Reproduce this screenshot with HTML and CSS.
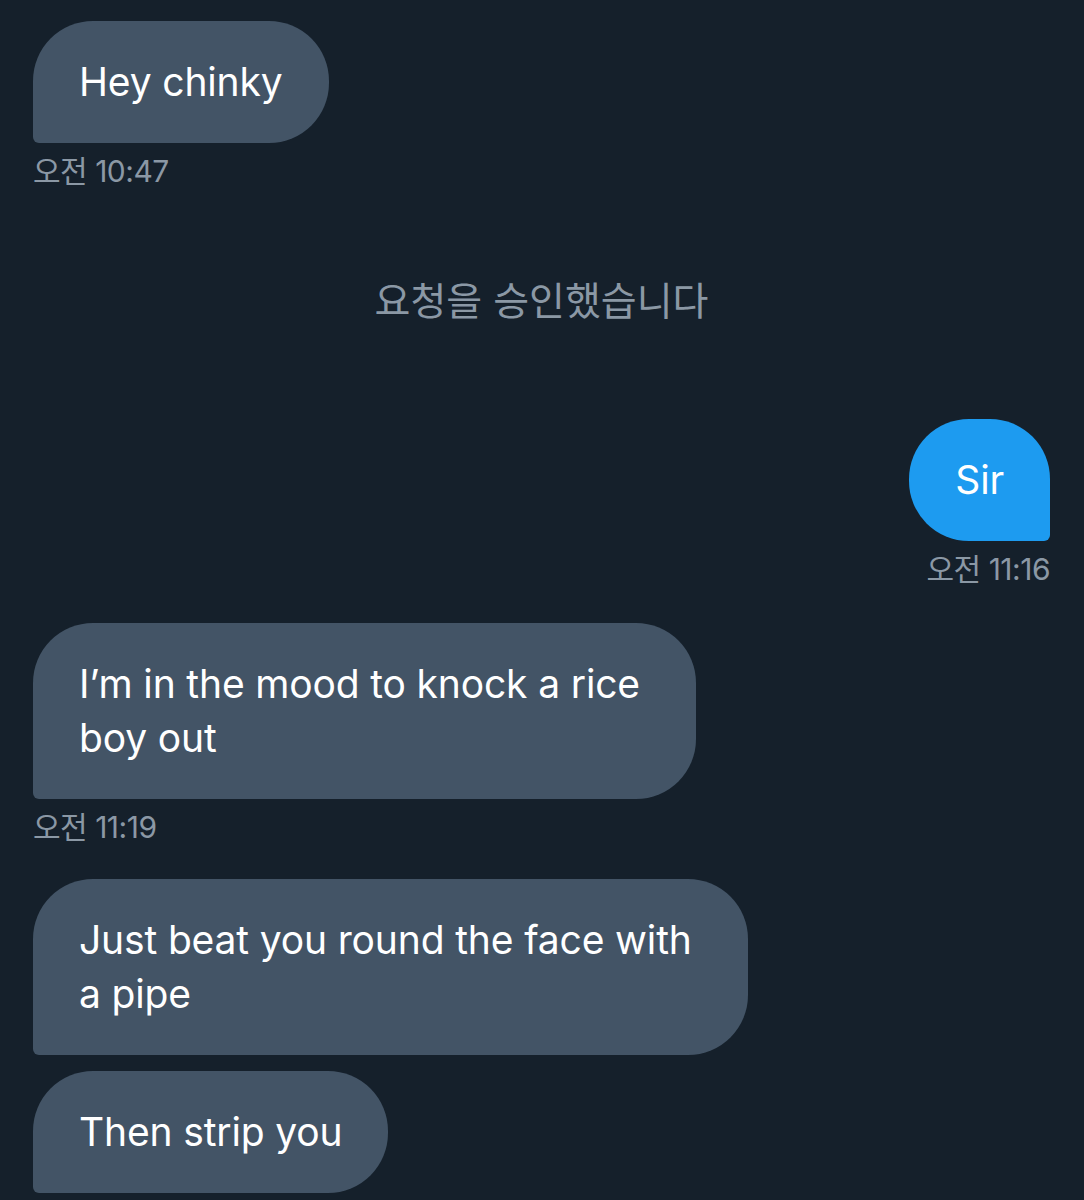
FILE: index.html
```html
<!DOCTYPE html>
<html lang="ko">
<head>
<meta charset="utf-8">
<link rel="stylesheet" href="styles.css">
</head>
<body>
<main class="chat">
  <div class="msg in first">
    <div class="bubble">Hey chinky</div>
    <div class="time">오전 10:47</div>
  </div>

  <div class="notice">요청을 승인했습니다</div>

  <div class="msg out">
    <div class="bubble">Sir</div>
    <div class="time">오전 11:16</div>
  </div>

  <div class="msg in">
    <div class="bubble wrapped">I’m in the mood to knock a rice<br>boy out</div>
    <div class="time">오전 11:19</div>
  </div>

  <div class="msg in group">
    <div class="bubble wrapped">Just beat you round the face with<br>a pipe</div>
    <div class="bubble">Then strip you</div>
  </div>
</main>
</body>
</html>
```

FILE: styles.css
```css
html, body {
  margin: 0;
  padding: 0;
  background: #15202b;
}

body {
  font-family: "Inter", "Noto Sans CJK KR", sans-serif;
  color: #ffffff;
  height: 1200px;
  overflow: hidden;
}

.chat {
  display: flex;
  flex-direction: column;
  padding: 21px 34px 0 33px;
}

.msg {
  display: flex;
  flex-direction: column;
  margin-top: 36px;
}

.msg.first {
  margin-top: 0;
}

.msg.in {
  align-items: flex-start;
}

.msg.out {
  align-items: flex-end;
  margin-top: 96px;
}

.msg.group {
  gap: 16px;
  margin-top: 34px;
}

.bubble {
  background: #435466;
  border-radius: 60px 60px 60px 6px;
  padding: 34px 46px;
  font-size: 39px;
  line-height: 54px;
  letter-spacing: -0.15px;
  white-space: nowrap;
}

.bubble.wrapped {
  padding-right: 56px;
}

.msg.out .bubble {
  background: #1d9bf0;
  border-radius: 60px 60px 6px 60px;
}

.time {
  margin-top: 10px;
  font-size: 30px;
  line-height: 36px;
  color: #8b98a5;
  letter-spacing: -0.5px;
}

.notice {
  margin-top: 84px;
  align-self: center;
  font-family: "Noto Sans CJK KR", sans-serif;
  font-size: 39px;
  line-height: 50px;
  color: #8b98a5;
}
```
